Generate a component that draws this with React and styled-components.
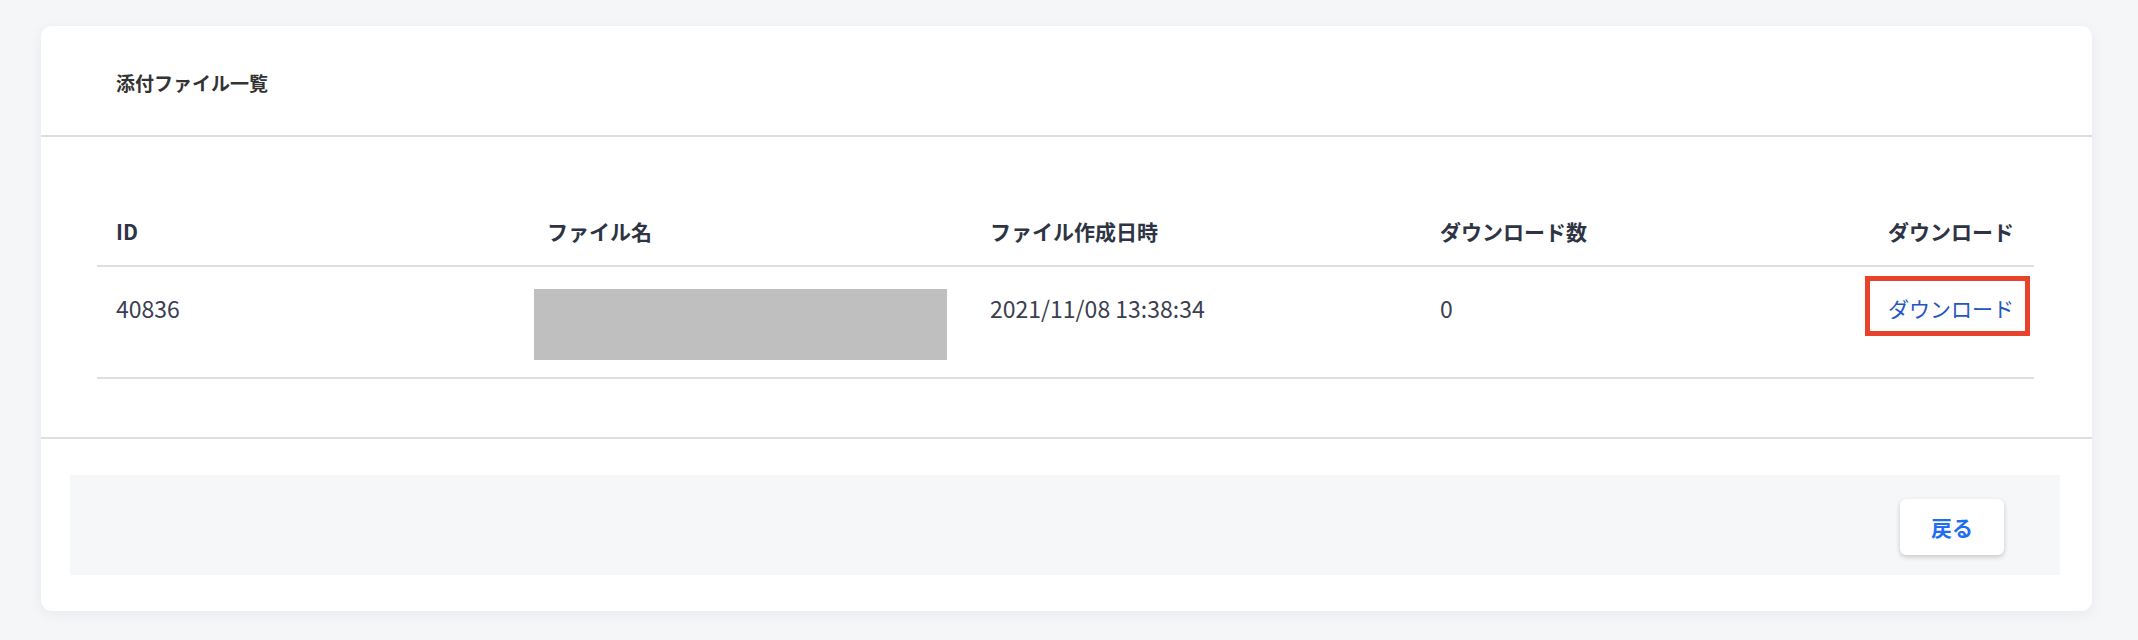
import React from "react";
import styled, { createGlobalStyle } from "styled-components";

const GlobalStyle = createGlobalStyle`
  body {
    margin: 0;
    background: #f5f6f8;
    font-family: "Noto Sans CJK JP", "Noto Sans", sans-serif;
  }
`;

const files = [
  { id: "40836", createdAt: "2021/11/08 13:38:34", count: 0 },
];

function App() {
  return (
    <>
      <GlobalStyle />
      <Page>
        <Card>
          <CardHeader>
            <Title>添付ファイル一覧</Title>
          </CardHeader>
          <CardBody>
            <Table>
              <colgroup>
                <col style={{ width: 431 }} />
                <col style={{ width: 443 }} />
                <col style={{ width: 450 }} />
                <col style={{ width: 400 }} />
                <col />
              </colgroup>
              <thead>
                <tr>
                  <Th>ID</Th>
                  <Th>ファイル名</Th>
                  <Th>ファイル作成日時</Th>
                  <Th>ダウンロード数</Th>
                  <Th $right>ダウンロード</Th>
                </tr>
              </thead>
              <tbody>
                {files.map((f) => (
                  <tr key={f.id}>
                    <Td $num>{f.id}</Td>
                    <Td>
                      <Redacted />
                    </Td>
                    <Td $num>{f.createdAt}</Td>
                    <Td $num>{f.count}</Td>
                    <Td $right>
                      <DownloadLink href="#">ダウンロード</DownloadLink>
                    </Td>
                  </tr>
                ))}
              </tbody>
            </Table>
          </CardBody>
          <CardFooter>
            <ActionBar>
              <BackButton type="button">戻る</BackButton>
            </ActionBar>
          </CardFooter>
        </Card>
      </Page>
    </>
  );
}

export default App;

const Page = styled.div`
  padding: 26px 46px 28px 41px;
`;

const Card = styled.div`
  background: #fff;
  border-radius: 11px;
  box-shadow: 0 3px 14px rgba(30, 40, 70, 0.06);
`;

const CardHeader = styled.div`
  padding: 42px 75px 37px;
  border-bottom: 2px solid #dedede;
`;

const Title = styled.h2`
  margin: 0;
  font-size: 19px;
  line-height: 30px;
  font-weight: 700;
  color: #333;
`;

const CardBody = styled.div`
  padding: 56px 58px 58px 56px;
  border-bottom: 2px solid #dedede;
`;

const Table = styled.table`
  width: 100%;
  table-layout: fixed;
  border-collapse: collapse;
`;

const Th = styled.th`
  padding: 23px 20px 19px 19px;
  font-size: 21px;
  line-height: 30px;
  font-weight: 700;
  color: #2e3443;
  text-align: ${(p) => (p.$right ? "right" : "left")};
  border-bottom: 2px solid #dedede;
  white-space: nowrap;
`;

const Td = styled.td`
  padding: 26px 20px 17px 19px;
  font-size: ${(p) => (p.$num ? "23px" : "21px")};
  line-height: 30px;
  color: #3a4050;
  vertical-align: top;
  text-align: ${(p) => (p.$right ? "right" : "left")};
  border-bottom: 2px solid #dedede;
  white-space: nowrap;
`;

const Redacted = styled.div`
  width: 413px;
  height: 71px;
  margin: -4px 0 0 -13px;
  background: #bfbfbf;
`;

const DownloadLink = styled.a`
  position: relative;
  display: inline-block;
  color: #2456c0;
  text-decoration: none;

  &::after {
    content: "";
    position: absolute;
    top: -17px;
    bottom: -13px;
    left: -23px;
    right: -16px;
    border: 5px solid #e8422a;
  }
`;

const CardFooter = styled.div`
  padding: 36px 32px 36px 29px;
`;

const ActionBar = styled.div`
  display: flex;
  justify-content: flex-end;
  align-items: center;
  height: 100px;
  padding-right: 56px;
  background: #f6f7f9;
`;

const BackButton = styled.button`
  width: 104px;
  height: 56px;
  margin-top: 4px;
  border: none;
  border-radius: 6px;
  background: #fff;
  box-shadow: 0 2px 5px rgba(0, 0, 0, 0.2);
  color: #1f6ef2;
  font-family: inherit;
  font-size: 21px;
  font-weight: 700;
  cursor: pointer;
`;
